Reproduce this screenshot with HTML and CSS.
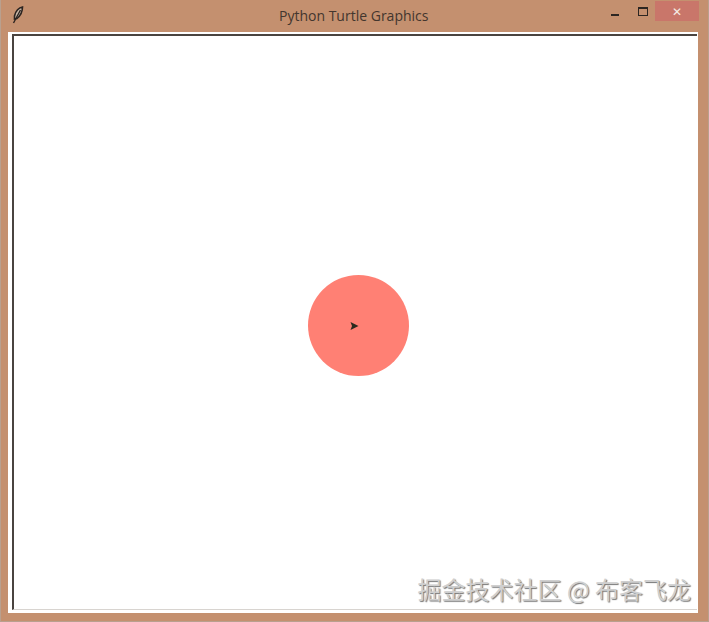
FILE: index.html
```html
<!DOCTYPE html>
<html lang="en">
<head>
    <meta charset="UTF-8">
    <title>Python Turtle Graphics</title>
    <link rel="stylesheet" href="styles.css">
</head>
<body>

<div class="window">
    <div class="titlebar">
        <svg class="feather" width="12" height="18" viewBox="0 0 12 18">
            <path d="M10.5 1 C7 1.5 3.5 5 2.5 10 L2.5 13 L5 12.5 C8 10 10.5 5 10.5 1 Z" fill="#c8b8a8" stroke="#2c2420" stroke-width="1.6"/>
            <path d="M8.5 4 L1.5 17" stroke="#2c2420" stroke-width="1.4" fill="none"/>
        </svg>
        <span class="title">Python Turtle Graphics</span>
        <div class="controls">
            <div class="btn min"><span class="min-icon"></span></div>
            <div class="btn max"><span class="max-icon"></span></div>
            <div class="btn close"><span>&#10005;</span></div>
        </div>
    </div>
    <div class="frame">
        <div class="canvas">
            <div class="dot"></div>
            <svg class="turtle" width="9" height="8" viewBox="0 0 9 8">
                <path d="M0.5 0 L8.5 4 L0.5 8 L2 4 Z" fill="#2a2a1e"/>
            </svg>
            <div class="watermark">掘金技术社区 @ 布客飞龙</div>
        </div>
    </div>
</div>

</body>
</html>
```

FILE: styles.css
```css
* {
    box-sizing: border-box;
}
body {
    margin: 0;
    font-family: "Open Sans", "Liberation Sans", sans-serif;
}
.window {
    width: 709px;
    height: 622px;
    display: flex;
    flex-direction: column;
    background-color: #c4906f;
    border: 1px solid #b9a08e;
    border-top: none;
    padding: 0 10px 8px 7px;
}
.titlebar {
    height: 32px;
    flex-shrink: 0;
    display: flex;
    align-items: center;
    position: relative;
}
.feather {
    margin: 0 0 3px 4px;
}
.title {
    position: absolute;
    left: 271px;
    top: 7px;
    font-size: 14px;
    line-height: 18px;
    color: #43362e;
}
.controls {
    margin-left: auto;
    display: flex;
    align-self: flex-start;
    margin-top: 1px;
    margin-right: -1px;
}
.btn {
    height: 20px;
    display: flex;
    align-items: center;
    justify-content: center;
}
.min {
    width: 32px;
}
.max {
    width: 24px;
}
.min-icon {
    width: 8px;
    height: 2px;
    margin-top: 8px;
    background-color: #2c2622;
}
.max-icon {
    width: 10px;
    height: 9px;
    margin-top: 0;
    border: 1px solid #2c2622;
    border-top-width: 2px;
}
.close {
    width: 44px;
    background-color: #c9766a;
    color: #f6ece6;
    font-size: 12px;
}
.frame {
    flex: 1;
    background-color: #fff;
    padding: 2px 1px 3px 4px;
    min-height: 0;
}
.canvas {
    height: 100%;
    position: relative;
    background-color: #fff;
    border-top: 2px solid #4a4440;
    border-left: 2px solid #4a4440;
    border-bottom: 1px solid #d8d4d0;
}
.dot {
    position: absolute;
    left: 294px;
    top: 239px;
    width: 101px;
    height: 101px;
    border-radius: 50%;
    background-color: #ff8074;
}
.turtle {
    position: absolute;
    left: 336px;
    top: 286px;
}
.watermark {
    position: absolute;
    right: 6px;
    bottom: 5px;
    font-family: "Noto Sans CJK SC", sans-serif;
    font-size: 24px;
    line-height: 30px;
    white-space: nowrap;
    color: #cfcfcf;
    text-shadow: 1px 1px 1px #767676;
}
```
